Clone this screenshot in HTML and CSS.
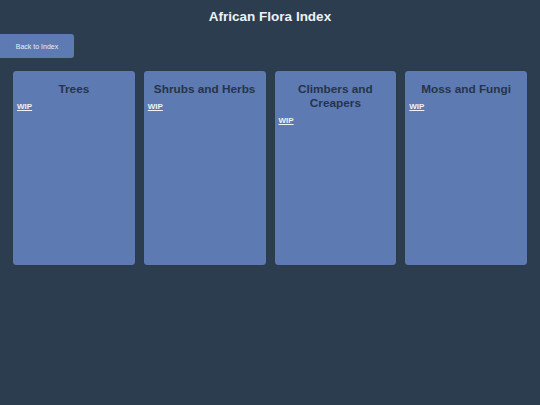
FILE: index.html
```html
<!DOCTYPE html>
<html>
<head>
<meta charset="utf-8">
<link rel="stylesheet" href="styles.css">
</head>
<body>
<h1 class="title">African Flora Index</h1>
<div class="nav"><a class="back" href="#">Back to Index</a></div>
<div class="cards">
  <div class="card"><h2 class="card-title">Trees</h2><p class="status"><a class="wip" href="#">WIP</a></p></div>
  <div class="card"><h2 class="card-title">Shrubs and Herbs</h2><p class="status"><a class="wip" href="#">WIP</a></p></div>
  <div class="card"><h2 class="card-title">Climbers and Creapers</h2><p class="status"><a class="wip" href="#">WIP</a></p></div>
  <div class="card"><h2 class="card-title">Moss and Fungi</h2><p class="status"><a class="wip" href="#">WIP</a></p></div>
</div>
</body>
</html>
```
FILE: styles.css
```css
html, body {
  margin: 0;
  padding: 0;
  background: #2d3d50;
  font-family: "Liberation Sans", Arial, sans-serif;
  height: 100%;
}
.title {
  margin: 0;
  padding-top: 8px;
  text-align: center;
  color: #eef1f5;
  font-size: 13.5px;
  line-height: 17px;
  font-weight: bold;
}
.nav {
  margin-top: 9px;
  display: flex;
}
.back {
  display: flex;
  align-items: center;
  justify-content: center;
  width: 74px;
  height: 24px;
  background: #5d7ab2;
  border-radius: 0 3px 3px 0;
  color: #e8edf5;
  font-size: 7px;
  text-decoration: none;
}
.cards {
  display: grid;
  grid-template-columns: repeat(4, 1fr);
  gap: 9px;
  padding: 13px 13px 0 13px;
}
.card {
  background: #5d7ab2;
  border-radius: 3px;
  height: 194px;
  box-sizing: border-box;
  padding: 11px 4px 0 4px;
  box-shadow: 0 0 1px rgba(0,0,0,0.4);
}
.card-title {
  margin: 0 0 6px 0;
  text-align: center;
  color: #26344a;
  font-size: 11.8px;
  line-height: 14px;
  font-weight: bold;
}
.status {
  margin: 0;
  font-size: 8px;
  line-height: 10px;
}
.wip {
  color: #eef1f6;
  font-weight: bold;
  text-decoration: underline;
}
```
